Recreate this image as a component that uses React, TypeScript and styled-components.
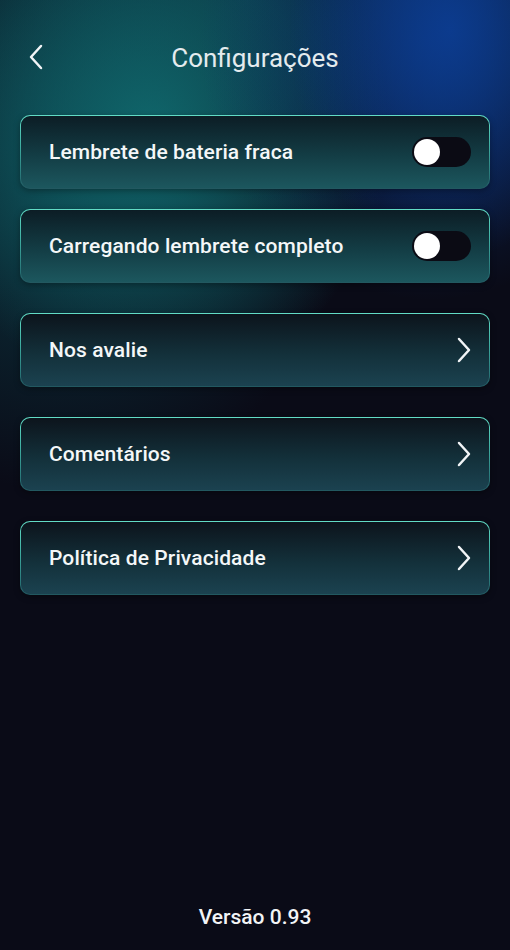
import styled, { createGlobalStyle } from "styled-components";
import { useState } from "react";

const GlobalStyle = createGlobalStyle`
  html, body {
    margin: 0;
    padding: 0;
    background: #0a0b17;
  }
  * {
    box-sizing: border-box;
  }
`;

const Screen = styled.div`
  position: relative;
  width: 510px;
  height: 950px;
  display: flex;
  flex-direction: column;
  overflow: hidden;
  font-family: Roboto, "Noto Sans", sans-serif;
  color: #f2f5f7;
  background:
    radial-gradient(ellipse 160px 230px at 450px 30px, rgba(12, 62, 150, 0.85), rgba(12, 62, 150, 0) 100%),
    radial-gradient(ellipse 230px 260px at 430px 40px, rgba(10, 50, 120, 0.75), rgba(10, 50, 120, 0) 100%),
    radial-gradient(ellipse 240px 260px at 150px 130px, rgba(16, 108, 112, 0.9), rgba(16, 108, 112, 0) 100%),
    radial-gradient(ellipse 300px 330px at 60px 160px, rgba(12, 80, 90, 0.65), rgba(12, 80, 90, 0) 100%),
    radial-gradient(ellipse 340px 200px at 250px 0px, rgba(12, 70, 85, 0.6), rgba(12, 70, 85, 0) 100%),
    #0a0b17;
`;

const Header = styled.header`
  height: 115px;
  display: flex;
  align-items: center;
  justify-content: center;
  position: relative;
`;

const BackButton = styled.button`
  position: absolute;
  left: 22px;
  top: 40px;
  width: 28px;
  height: 34px;
  padding: 0;
  border: none;
  background: transparent;
  display: flex;
  align-items: center;
  justify-content: center;
  cursor: pointer;
`;

const Title = styled.h1`
  margin: 0;
  font-size: 26px;
  font-weight: 400;
  color: #e4ebee;
`;

const Group = styled.div<{ $gap: number; $top?: number }>`
  display: flex;
  flex-direction: column;
  gap: ${(p) => p.$gap}px;
  margin-top: ${(p) => p.$top ?? 0}px;
  padding: 0 20px;
`;

const Card = styled.div<{ $glow?: boolean }>`
  height: 74px;
  display: flex;
  align-items: center;
  justify-content: space-between;
  padding: 0 17px 0 28px;
  border-radius: 10px;
  border: 1.5px solid transparent;
  background:
    ${(p) =>
        p.$glow
          ? "linear-gradient(180deg, #0c1d25 0%, #133d45 55%, #1c575e 100%)"
          : "linear-gradient(180deg, #0c141c 0%, #13303a 55%, #1b4250 100%)"}
      padding-box,
    linear-gradient(180deg, #62dcc6 0%, #3fb0a3 40%, #2a7a7c 80%, #22575f 100%) border-box;
  box-shadow: 0 2px 6px rgba(0, 0, 0, 0.35);
  cursor: pointer;
`;

const Label = styled.span`
  font-size: 21px;
  font-weight: 500;
  color: #f4f7f8;
  letter-spacing: 0.1px;
`;

const Track = styled.button<{ $on: boolean }>`
  position: relative;
  width: 59px;
  height: 30px;
  margin-right: 1px;
  padding: 0;
  border: none;
  border-radius: 15px;
  background: ${(p) => (p.$on ? "#2bb8a4" : "#0b0b14")};
  cursor: pointer;
`;

const Knob = styled.span<{ $on: boolean }>`
  position: absolute;
  top: 2px;
  left: ${(p) => (p.$on ? "31px" : "2px")};
  width: 26px;
  height: 26px;
  border-radius: 50%;
  background: #ffffff;
  transition: left 0.15s;
`;

const Footer = styled.footer`
  margin-top: auto;
  padding-bottom: 21px;
  text-align: center;
  font-size: 21px;
  font-weight: 500;
  color: #f2f4f6;
  line-height: 24px;
`;

const Chevron = ({ dir }: { dir: "left" | "right" }) => (
  <svg width="16" height="26" viewBox="0 0 16 26" fill="none">
    <path
      d={dir === "left" ? "M13 2 L3 13 L13 24" : "M3 2 L13 13 L3 24"}
      stroke="#f2f5f7"
      strokeWidth="2.5"
      strokeLinecap="round"
      strokeLinejoin="round"
    />
  </svg>
);

const Toggle = ({ on, onClick }: { on: boolean; onClick: () => void }) => (
  <Track $on={on} onClick={onClick} aria-pressed={on}>
    <Knob $on={on} />
  </Track>
);

const links = ["Nos avalie", "Comentários", "Política de Privacidade"];

export default function App() {
  const [lowBattery, setLowBattery] = useState(false);
  const [fullCharge, setFullCharge] = useState(false);

  return (
    <>
      <GlobalStyle />
      <Screen>
        <Header>
          <BackButton aria-label="Voltar">
            <Chevron dir="left" />
          </BackButton>
          <Title>Configurações</Title>
        </Header>

        <Group $gap={20}>
          <Card $glow>
            <Label>Lembrete de bateria fraca</Label>
            <Toggle on={lowBattery} onClick={() => setLowBattery(!lowBattery)} />
          </Card>
          <Card $glow>
            <Label>Carregando lembrete completo</Label>
            <Toggle on={fullCharge} onClick={() => setFullCharge(!fullCharge)} />
          </Card>
        </Group>

        <Group $gap={30} $top={30}>
          {links.map((l) => (
            <Card key={l}>
              <Label>{l}</Label>
              <Chevron dir="right" />
            </Card>
          ))}
        </Group>

        <Footer>Versão 0.93</Footer>
      </Screen>
    </>
  );
}
